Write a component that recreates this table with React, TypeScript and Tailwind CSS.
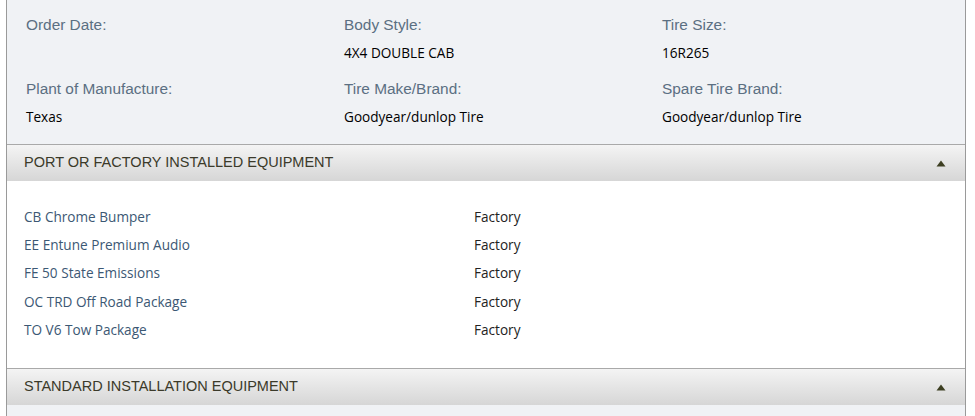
import React from "react";

const sans = { fontFamily: '"Liberation Sans", Arial, sans-serif' };
const open = { fontFamily: '"Open Sans", "Liberation Sans", sans-serif' };

function Field({ label, value }: { label: string; value?: string }) {
  return (
    <div className="h-[63px]">
      <div className="text-[15.4px] leading-[18px] text-[#5b6f82]" style={sans}>
        {label}
      </div>
      {value && (
        <div className="mt-[10px] text-[13.6px] leading-[18px] text-black" style={open}>
          {value}
        </div>
      )}
    </div>
  );
}

function Header({ title }: { title: string }) {
  return (
    <div className="flex h-[37px] items-center justify-between border-t border-[#a9a9a9] bg-gradient-to-b from-[#f4f4f4] to-[#d6d6d6] pl-[17px] pr-[19px]">
      <span className="text-[14.5px] text-[#3b3a2a]" style={sans}>
        {title}
      </span>
      <svg width="10" height="7" viewBox="0 0 10 7">
        <polygon points="5,0.5 9.5,6.5 0.5,6.5" fill="#3d3f22" />
      </svg>
    </div>
  );
}

const items = [
  "CB Chrome Bumper",
  "EE Entune Premium Audio",
  "FE 50 State Emissions",
  "OC TRD Off Road Package",
  "TO V6 Tow Package",
];

export default function App() {
  return (
    <div className="h-[416px] w-[975px] overflow-hidden bg-white">
      <div className="ml-[6px] h-[416px] w-[960px] border-x border-[#9a9a9a] bg-[#f0f2f5]">
        <div className="grid grid-cols-[318px_318px_318px] pl-[19px] pt-[16px] h-[144px]">
          <Field label="Order Date:" />
          <Field label="Body Style:" value="4X4 DOUBLE CAB" />
          <Field label="Tire Size:" value="16R265" />
          <Field label="Plant of Manufacture:" value="Texas" />
          <Field label="Tire Make/Brand:" value="Goodyear/dunlop Tire" />
          <Field label="Spare Tire Brand:" value="Goodyear/dunlop Tire" />
        </div>
        <Header title="PORT OR FACTORY INSTALLED EQUIPMENT" />
        <div className="h-[187px] bg-white pl-[17px] pt-[22px]">
          {items.map((it) => (
            <div key={it} className="flex h-[28.25px] items-center text-[13.6px]" style={open}>
              <span className="w-[450px] text-[#3c5874]">{it}</span>
              <span className="text-[#222]">Factory</span>
            </div>
          ))}
        </div>
        <Header title="STANDARD INSTALLATION EQUIPMENT" />
      </div>
    </div>
  );
}
